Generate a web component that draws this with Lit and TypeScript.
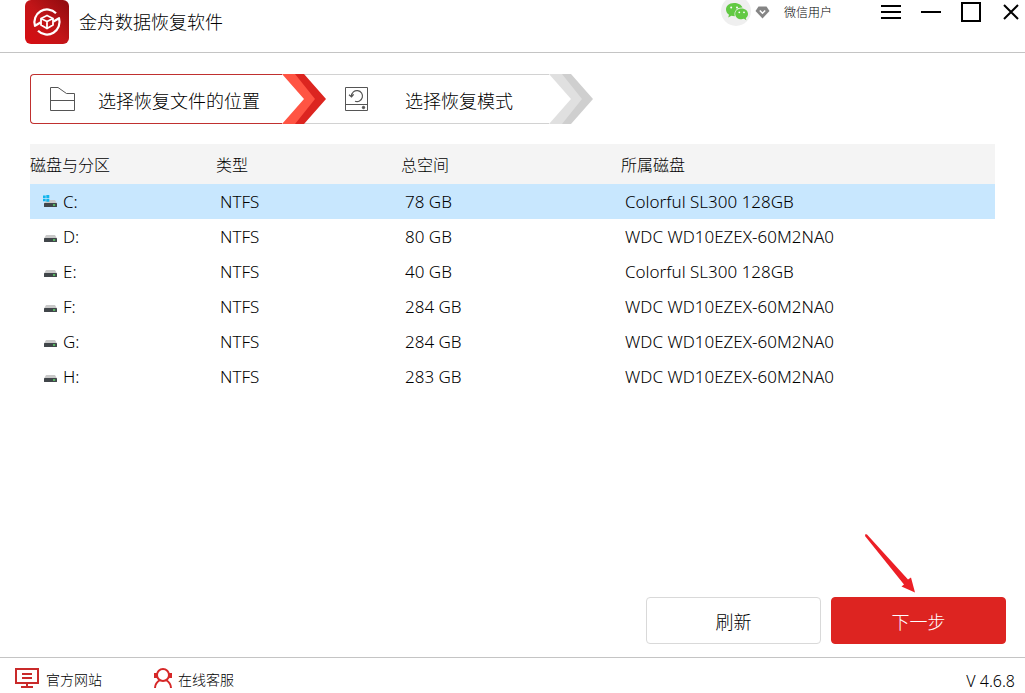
import { LitElement, html, css, svg } from "lit";
import { customElement, state } from "lit/decorators.js";

interface Volume {
  name: string;
  type: string;
  size: string;
  disk: string;
  system?: boolean;
}

const SSD = "Colorful SL300 128GB";
const HDD = "WDC WD10EZEX-60M2NA0";

const volumes: Volume[] = [
  { name: "C:", type: "NTFS", size: "78 GB", disk: SSD, system: true },
  { name: "D:", type: "NTFS", size: "80 GB", disk: HDD },
  { name: "E:", type: "NTFS", size: "40 GB", disk: SSD },
  { name: "F:", type: "NTFS", size: "284 GB", disk: HDD },
  { name: "G:", type: "NTFS", size: "284 GB", disk: HDD },
  { name: "H:", type: "NTFS", size: "283 GB", disk: HDD },
];

const chevron = (light: string, dark: string) => html`
  <svg class="chevron" width="44" height="50" viewBox="0 0 44 50" aria-hidden="true">
    <path fill=${light} d="M0 0H14L34 25 14 50H0L22 25z" />
    <path fill=${dark} d="M13 0H22L44 25 22 50H13L33 25z" />
  </svg>
`;

const driveIcon = (system = false) => html`
  <svg class="drive" width="16" height="16" viewBox="0 0 16 16" aria-hidden="true">
    <path fill="#c9c9c9" d="M4 6h9l2 3.500H2z" />
    <rect x="2" y="9" width="13" height="4" rx=".6" fill="#41464a" />
    <rect x="11" y="10.300" width="2.200" height="1.400" fill="#5fe36a" />
    ${system
      ? svg`<path fill="#12b4ec" d="M1 1.500h2.700v2.500h-2.700zM4.300 1h3v3h-3zM1 4.800h2.700v2.500h-2.700zM4.300 4.800h3v3h-3z" />`
      : ""}
  </svg>
`;

@customElement("app-root")
export class AppRoot extends LitElement {
  @state() private selected = "C:";

  static styles = css`
    :host {
      display: flex;
      flex-direction: column;
      min-height: 100vh;
      background: #fff;
      color: #000;
      font: 300 16px/24px "Noto Sans CJK SC", sans-serif;
    }
    * {
      box-sizing: border-box;
    }
    svg {
      display: block;
      flex: none;
    }
    button {
      font: inherit;
      color: inherit;
      cursor: pointer;
    }
    .titlebar {
      display: flex;
      justify-content: space-between;
      align-items: flex-start;
      height: 53px;
      padding-left: 25px;
      border-bottom: 1px solid #c4c4c4;
    }
    .brand {
      display: flex;
      align-items: center;
      gap: 10px;
    }
    .brand h1 {
      margin: 0;
      padding-bottom: 2px;
      font-size: 18px;
      font-weight: 300;
    }
    .tools,
    .user {
      display: flex;
      align-items: center;
    }
    .tools {
      height: 24px;
    }
    .user {
      margin-right: 39px;
      font-size: 12px;
    }
    .gem {
      margin: 0 14px 0 4px;
    }
    .window-button {
      display: grid;
      place-items: center;
      width: 40px;
      height: 24px;
      padding: 0;
      border: 0;
      background: none;
    }
    .window-button:last-child {
      width: 34px;
      padding-left: 6px;
    }
    main {
      flex: 1;
      display: flex;
      flex-direction: column;
      padding: 21px 30px 13px;
    }
    .steps {
      display: flex;
      margin: 0 0 20px;
      padding: 0;
      list-style: none;
      font-size: 18px;
    }
    .step {
      display: flex;
      height: 50px;
    }
    .step + .step {
      margin-left: -22px;
    }
    .step.current {
      position: relative;
      z-index: 1;
    }
    .step-label {
      display: flex;
      align-items: center;
      border: solid #d2d2d2;
      border-width: 1px 0;
      padding: 0 36px 0 41px;
      gap: 37px;
    }
    .current .step-label {
      border: 1px solid #c0302f;
      border-right: 0;
      border-radius: 4px 0 0 4px;
      padding: 0 22px 0 19px;
      gap: 23px;
    }
    .step-label span {
      padding-top: 2px;
    }
    table {
      width: 100%;
      table-layout: fixed;
      border-collapse: collapse;
      text-align: left;
    }
    .col-size {
      width: 220px;
    }
    .col-name,
    .col-type {
      width: 185px;
    }
    th {
      height: 40px;
      padding: 0 1px;
      background: #f4f4f4;
      font-weight: 300;
    }
    th:first-child {
      padding-left: 0;
    }
    td {
      height: 35px;
      padding: 0 5px;
      font-size: 17px;
    }
    td,
    .version {
      font-family: "Noto Sans", "Noto Sans CJK SC", sans-serif;
    }
    .row {
      cursor: pointer;
    }
    .row.selected {
      background: #c8e7fe;
    }
    .volume {
      display: flex;
      align-items: center;
      gap: 5px;
      padding-left: 7px;
    }
    .actions {
      display: flex;
      justify-content: flex-end;
      gap: 10px;
      margin: auto -11px 0 0;
      font-size: 18px;
    }
    .action {
      position: relative;
      width: 175px;
      height: 47px;
      padding: 0;
      border: 1px solid #d9d9d9;
      border-radius: 4px;
      background: #fff;
    }
    .action.primary {
      border-color: #dd2421;
      background: #dd2421;
      color: #fff;
    }
    .pointer {
      position: absolute;
      left: 32px;
      bottom: 48px;
      pointer-events: none;
    }
    footer {
      display: flex;
      align-items: flex-start;
      height: 36px;
      padding: 10px 10px 0 15px;
      border-top: 1px solid #c4c4c4;
      font-size: 14px;
      line-height: 22px;
    }
    .link {
      display: flex;
      gap: 7px;
      margin-right: 51px;
      color: inherit;
      text-decoration: none;
    }
    .support {
      gap: 5px;
    }
    .version {
      margin-left: auto;
      font-size: 16px;
      line-height: 26px;
    }
  `;

  private renderHeader() {
    return html`
      <header class="titlebar">
        <div class="brand">
          <svg width="44" height="44" viewBox="0 0 44 44" aria-hidden="true">
            <defs>
              <linearGradient id="logo" x1="0" y1="1" x2="1" y2="0">
                <stop offset="0" stop-color="#d80d12" />
                <stop offset=".5" stop-color="#c21518" />
                <stop offset="1" stop-color="#8d0b0e" />
              </linearGradient>
            </defs>
            <rect width="44" height="44" rx="6" fill="url(#logo)" />
            <g fill="none" stroke="#fff" stroke-width="2.200" stroke-linejoin="round">
              <path d="M31 13.200A12.600 12.600 0 0 0 10 25.800L15.500 22.500" />
              <path d="M13 30.800A12.600 12.600 0 0 0 34 18.200L28.500 21.500" />
              <path stroke-width="1.800" d="M22 15.500l6 3v6.500l-6 3.500-6-3.500v-6.500zM16 18.500l6 3 6-3M22 21.500v7" />
            </g>
          </svg>
          <h1>金舟数据恢复软件</h1>
        </div>
        <div class="tools">
          <div class="user">
            <svg width="30" height="27" viewBox="0 0 30 27" aria-hidden="true">
              <circle cx="15" cy="12" r="15" fill="#efefef" />
              <path fill="#62c943" d="M13 4C7.800 4 5 7.200 5 10.500c0 2.200 1.200 4 3 5.200L7.200 18.500l3.200-1.700c1 .3 2 .4 3.400.4C12.500 12 16 8.500 21.500 8.600 20.500 5.700 17 4 13 4z" />
              <path fill="#62c943" d="M20.500 9.600c-3.800 0-6.300 2.400-6.300 5.300s2.600 5.300 6.300 5.300c.8 0 1.600-.1 2.400-.4l2.500 1.400-.6-2.300c1.400-1 2.200-2.400 2.200-4 0-2.900-2.700-5.300-6.500-5.300z" />
              <g fill="#fff">
                <circle cx="10.200" cy="8.500" r="1" />
                <circle cx="16" cy="8.500" r="1" />
                <circle cx="18.300" cy="13.300" r=".9" />
                <circle cx="23" cy="13.300" r=".9" />
              </g>
            </svg>
            <svg class="gem" width="15" height="13" viewBox="0 0 15 13" aria-hidden="true">
              <path fill="#858585" d="M3.500 0.500h8L14.500 5 7.500 12.500.5 5z" />
              <path fill="none" stroke="#fff" stroke-width="1.500" d="M4.800 4.500l2.700 2.700 2.700-2.700" />
            </svg>
            <span>微信用户</span>
          </div>
          <button class="window-button" aria-label="菜单">
            <svg width="20" height="14"><path d="M0 1h20M0 7h20M0 13h20" stroke="#000" stroke-width="2" /></svg>
          </button>
          <button class="window-button" aria-label="最小化">
            <svg width="20" height="2"><path d="M0 1h20" stroke="#000" stroke-width="2" /></svg>
          </button>
          <button class="window-button" aria-label="最大化">
            <svg width="20" height="20"><path d="M1 1h18v18H1z" fill="none" stroke="#000" stroke-width="2" /></svg>
          </button>
          <button class="window-button" aria-label="关闭">
            <svg width="16" height="16"><path d="M1 1l14 14M15 1L1 15" stroke="#000" stroke-width="2" /></svg>
          </button>
        </div>
      </header>
    `;
  }

  private renderSteps() {
    return html`
      <ol class="steps">
        <li class="step current" aria-current="step">
          <div class="step-label">
            <svg width="25" height="24" viewBox="0 0 25 24" fill="none" stroke="#555" aria-hidden="true">
              <path d="M.5.500H8L16.500 6.500H24.500V23.500H.5zM.5 13.500h24" />
            </svg>
            <span>选择恢复文件的位置</span>
          </div>
          ${chevron("#ff5443", "#dc2520")}
        </li>
        <li class="step">
          <div class="step-label">
            <svg width="23" height="24" viewBox="0 0 23 24" fill="none" stroke="#555" aria-hidden="true">
              <path d="M.5.500h22v23H.5zM.5 17.500h22" />
              <path stroke-width="1.200" d="M6.500 9A5.500 5.500 0 1 1 10 14.200M4 7.800l2.500 2 2.200-2.500" />
              <circle cx="18.500" cy="20.500" r="1.200" fill="#555" />
            </svg>
            <span>选择恢复模式</span>
          </div>
          ${chevron("#e0e0e0", "#cfcfcf")}
        </li>
      </ol>
    `;
  }

  private renderTable() {
    return html`
      <table>
        <colgroup>
          <col class="col-name" />
          <col class="col-type" />
          <col class="col-size" />
          <col />
        </colgroup>
        <thead>
          <tr>
            <th scope="col">磁盘与分区</th>
            <th scope="col">类型</th>
            <th scope="col">总空间</th>
            <th scope="col">所属磁盘</th>
          </tr>
        </thead>
        <tbody>
          ${volumes.map(
            (v) => html`
              <tr
                class="row ${v.name === this.selected ? "selected" : ""}"
                @click=${() => (this.selected = v.name)}
              >
                <td><div class="volume">${driveIcon(v.system)}<span>${v.name}</span></div></td>
                <td>${v.type}</td>
                <td>${v.size}</td>
                <td>${v.disk}</td>
              </tr>
            `
          )}
        </tbody>
      </table>
    `;
  }

  private renderActions() {
    return html`
      <div class="actions">
        <button class="action">刷新</button>
        <button class="action primary">
          下一步
          <svg class="pointer" width="54" height="62" viewBox="0 0 54 62" aria-hidden="true">
            <path fill="#ec1f26" d="M1.500 1L3 1.500 44 46.500 47 44.500 51 59.500 37.500 53.500 40 51.500 1 3z" />
          </svg>
        </button>
      </div>
    `;
  }

  render() {
    return html`
      ${this.renderHeader()}
      <main>${this.renderSteps()} ${this.renderTable()} ${this.renderActions()}</main>
      <footer>
        <a class="link" href="#site">
          <svg width="24" height="20" viewBox="0 0 24 20" fill="none" stroke="#c92a2a" stroke-width="2" aria-hidden="true">
            <path d="M1 1h22v14H1zM7 6h10M7 10h10M12 15v4M6 19h12" />
          </svg>
          <span>官方网站</span>
        </a>
        <a class="link support" href="#support">
          <svg width="20" height="20" viewBox="0 0 20 20" fill="none" stroke="#d62828" stroke-width="2" aria-hidden="true">
            <circle cx="10" cy="7" r="6" />
            <path d="M2 20c0-4 2.500-6.500 5-8M18 20c0-4-2.500-6.500-5-8" />
            <path stroke-width="3" d="M2.500 5v5M17.500 5v5" />
          </svg>
          <span>在线客服</span>
        </a>
        <span class="version">V 4.6.8</span>
      </footer>
    `;
  }
}
